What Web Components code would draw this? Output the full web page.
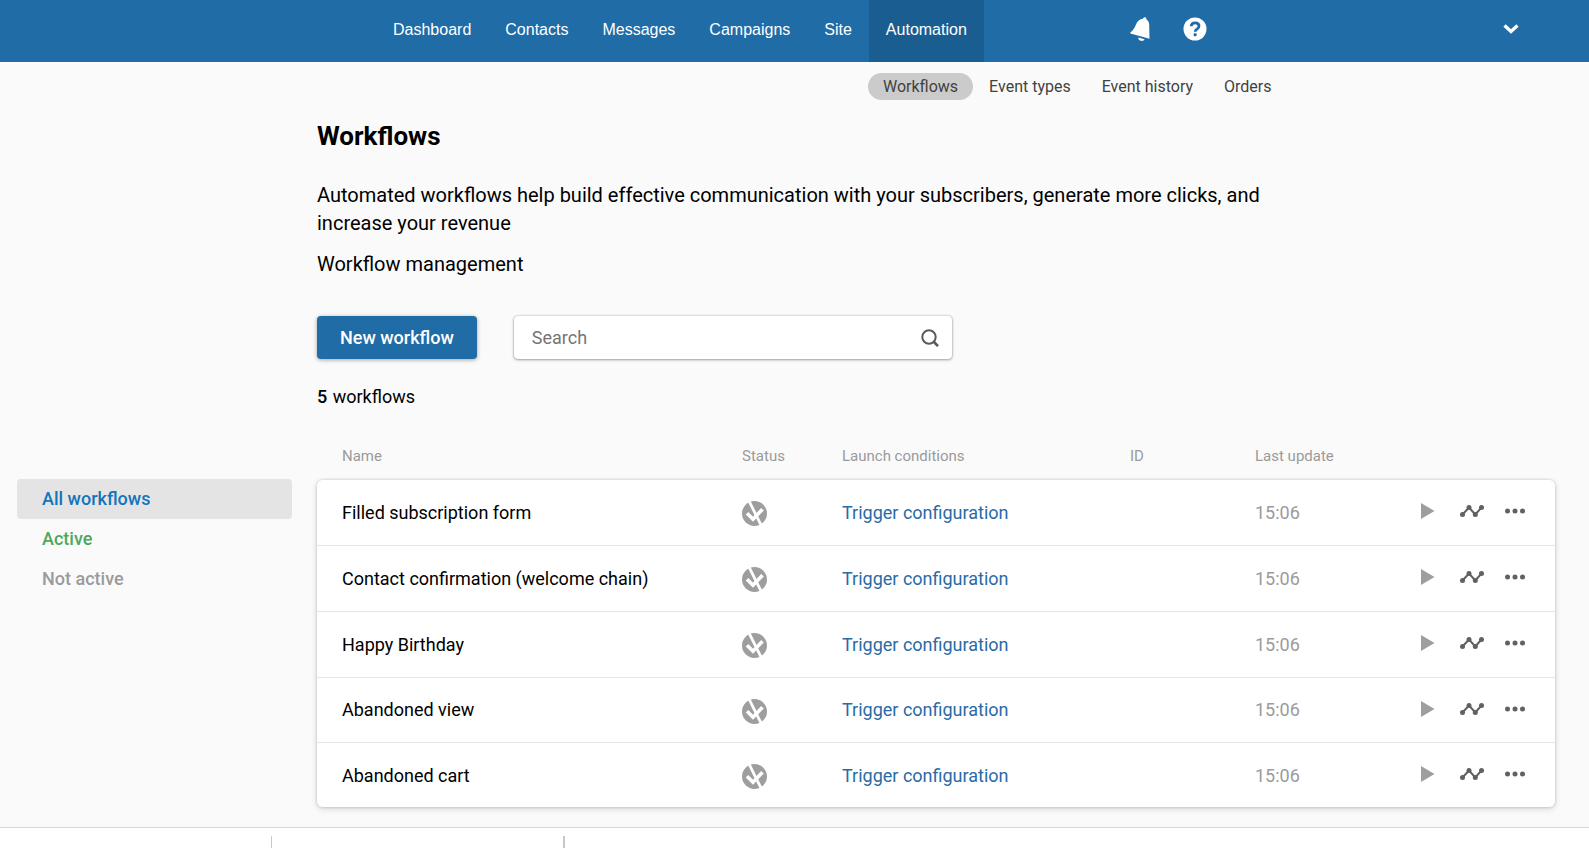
<!DOCTYPE html>
<html lang="en">
<head>
<meta charset="utf-8">
<title>Workflows</title>
<style>
  body {
    margin: 0;
    background: #fafafa;
    color: #000;
    font-family: Roboto, "Liberation Sans", sans-serif;
    font-size: 18px;
  }
</style>
</head>
<body>
<workflow-page></workflow-page>

<script>
class BaseElement extends HTMLElement {
  constructor() {
    super();
    this.attachShadow({ mode: "open" });
  }

  connectedCallback() {
    const template = document.createElement("template");
    template.innerHTML = `<style>${this.getStyles()}</style>${this.getTemplate()}`;
    this.shadowRoot.replaceChildren(template.content.cloneNode(true));
  }
}

class TopBar extends BaseElement {
  getTemplate() {
    const items = ["Dashboard", "Contacts", "Messages", "Campaigns", "Site", "Automation"];
    return `
    <nav aria-label="Main">
      ${items.map((item) => `<a href="#"${item === "Automation" ? ' class="active"' : ""}>${item}</a>`).join("")}
    </nav>
    <div class="tools">
      <button aria-label="Notifications">
        <svg width="20" height="24" viewBox="0 0 20 24" fill="#fff">
          <path d="M14.8 0.2c1.2.1 1.9 1 1.6 2.2 1.9 1.2 2.8 3 2.8 5.4l.3 14L.4 16.6c-.3-.7 0-1.2.5-1.6 2.400-2 3.800-4.200 5-7.200C7.300 4.200 9.600 2.100 13 1.800c.2-1 .8-1.600 1.800-1.600z"/>
          <path d="M8.200 20.400l6.400 1.900c-.7 1.300-2 1.900-3.600 1.500-1.700-.5-2.700-1.700-2.800-3.400z"/>
        </svg>
      </button>
      <button aria-label="Help">
        <svg width="24" height="24" viewBox="0 0 24 24">
          <circle cx="12" cy="12" r="11.500" fill="#fff"/>
          <path d="M8.200 9.300c.1-2.200 1.600-3.500 3.900-3.500 2.300 0 3.900 1.300 3.900 3.200 0 1.500-.8 2.300-2 3.100-1.200.8-1.800 1.300-1.800 2.700" fill="none" stroke="#1f6ca6" stroke-width="2.800"/>
          <rect x="10.700" y="16.300" width="2.900" height="2.900" rx=".6" fill="#1f6ca6"/>
        </svg>
      </button>
    </div>
    <button class="account" aria-label="Account">
      <svg width="16" height="10" viewBox="0 0 16 10" fill="none" stroke="#fff" stroke-width="3.400">
        <path d="M1.500 1.500L8 7.400l6.500-5.900"/>
      </svg>
    </button>`;
  }

  getStyles() {
    return `
    :host {
      display: flex;
      height: 62px;
      padding: 0 50px 0 376px;
      background: #1f6ca6;
    }
    nav {
      display: flex;
      font-family: "Liberation Sans", Arial, sans-serif;
      font-size: 16px;
    }
    a {
      padding: 0 17px;
      line-height: 59px;
      color: #fff;
      text-decoration: none;
    }
    .active { background: #1a5e91; }
    .tools {
      display: flex;
      gap: 33px;
      margin-left: 146px;
    }
    button {
      display: flex;
      align-items: center;
      height: 58px;
      padding: 0;
      border: 0;
      background: none;
      cursor: pointer;
    }
    .account {
      margin-left: auto;
      padding-right: 20px;
    }`;
  }
}

class SubNav extends BaseElement {
  getTemplate() {
    return `
    <a href="#" class="active">Workflows</a>
    <a href="#">Event types</a>
    <a href="#">Event history</a>
    <a href="#">Orders</a>`;
  }

  getStyles() {
    return `
    :host {
      display: flex;
      gap: 1px;
      padding: 11px 0 0 868px;
      font-size: 16px;
    }
    a {
      padding: 0 15px;
      line-height: 27px;
      color: #424242;
      text-decoration: none;
      border-radius: 14px;
      white-space: nowrap;
    }
    .active { background: #cbcbcb; }`;
  }
}

class StatusFilter extends BaseElement {
  getTemplate() {
    return `
    <a href="#" class="all">All workflows</a>
    <a href="#" class="on">Active</a>
    <a href="#" class="off">Not active</a>`;
  }

  getStyles() {
    return `
    :host { display: block; }
    a {
      display: block;
      padding: 0 25px;
      line-height: 40px;
      border-radius: 4px;
      font-weight: 500;
      text-decoration: none;
    }
    .all { background: #e4e4e4; color: #1274bb; }
    .on { color: #4ca85b; }
    .off { color: #9b9b9b; }`;
  }
}

class SearchBox extends BaseElement {
  getTemplate() {
    return `
    <input type="search" placeholder="Search" aria-label="Search">
    <button aria-label="Find">
      <svg width="18" height="18" viewBox="0 0 18 18" fill="none" stroke="#5a5a5a">
        <circle cx="8" cy="8" r="6.700" stroke-width="2"/>
        <path d="M12.500 12.500l4.500 4.700" stroke-width="2.600"/>
      </svg>
    </button>`;
  }

  getStyles() {
    return `
    :host {
      display: flex;
      align-items: center;
      box-sizing: border-box;
      width: 438px;
      height: 43px;
      padding: 0 13px 0 18px;
      background: #fff;
      border-radius: 4px;
      box-shadow: 0 0 2px rgba(0, 0, 0, .3), 0 1px 3px rgba(0, 0, 0, .3);
    }
    input {
      flex: 1;
      min-width: 0;
      padding: 0;
      border: 0;
      outline: 0;
      background: none;
      font: inherit;
    }
    input::placeholder { color: #757575; }
    button {
      display: flex;
      padding: 0;
      border: 0;
      background: none;
    }`;
  }
}

class WorkflowTable extends BaseElement {
  getRow(name) {
    return `
    <tr>
      <td>${name}</td>
      <td>
        <svg class="status" role="img" aria-label="Not active" width="25" height="25" viewBox="0 0 25 25">
          <circle cx="12.500" cy="12.500" r="12.500" fill="#9e9e9e"/>
          <path d="M5 12.200l6 6L20.500 8.300" fill="none" stroke="#fff" stroke-width="3.600"/>
          <path d="M6.500-1L20 26" stroke="#fff" stroke-width="2.800"/>
        </svg>
      </td>
      <td><a href="#">Trigger configuration</a></td>
      <td></td>
      <td class="time">15:06</td>
      <td>
        <div class="actions">
          <button aria-label="Launch">
            <svg width="14" height="16" viewBox="0 0 14 16"><path d="M0 0l13.500 8L0 16z" fill="#9e9e9e"/></svg>
          </button>
          <button aria-label="Statistics">
            <svg width="24" height="14" viewBox="0 0 24 14" fill="#616161">
              <path d="M2.500 10.500L9 3.500l6.300 7L21.500 3.500" fill="none" stroke="#616161" stroke-width="2"/>
              <circle cx="2.500" cy="10.500" r="2.500"/><circle cx="9" cy="3.500" r="2.500"/>
              <circle cx="15.300" cy="10.500" r="2.500"/><circle cx="21.500" cy="3.500" r="2.500"/>
            </svg>
          </button>
          <button aria-label="More">
            <svg width="20" height="6" viewBox="0 0 20 6" fill="#616161">
              <circle cx="2.500" cy="3" r="2.500"/><circle cx="10" cy="3" r="2.500"/><circle cx="17.500" cy="3" r="2.500"/>
            </svg>
          </button>
        </div>
      </td>
    </tr>`;
  }

  getTemplate() {
    const names = [
      "Filled subscription form",
      "Contact confirmation (welcome chain)",
      "Happy Birthday",
      "Abandoned view",
      "Abandoned cart",
    ];
    return `
    <table>
      <colgroup>
        <col><col class="status-col"><col class="launch-col">
        <col class="id-col"><col class="date-col"><col class="date-col">
      </colgroup>
      <thead>
        <tr><th>Name</th><th>Status</th><th>Launch conditions</th><th>ID</th><th>Last update</th><th></th></tr>
      </thead>
      <tbody>${names.map((name) => this.getRow(name)).join("")}</tbody>
    </table>`;
  }

  getStyles() {
    return `
    :host { display: block; }
    table {
      width: 100%;
      height: 375px;
      table-layout: fixed;
      border-spacing: 0;
    }
    .status-col { width: 100px; }
    .launch-col { width: 288px; }
    .id-col { width: 125px; }
    .date-col { width: 150px; }
    th, td {
      padding: 0;
      text-align: left;
    }
    th:first-child, td:first-child { padding-left: 25px; }
    th {
      height: 48px;
      color: #9b9b9b;
      font-size: 15px;
      font-weight: 400;
    }
    tbody {
      border-radius: 6px;
      box-shadow: 0 0 3px rgba(0, 0, 0, .2), 0 2px 6px rgba(0, 0, 0, .14);
    }
    td {
      background: #fff;
      border-bottom: 1px solid #e6e6e6;
    }
    tr:last-child td { border-bottom: 0; }
    tr:first-child td:first-child { border-top-left-radius: 6px; }
    tr:first-child td:last-child { border-top-right-radius: 6px; }
    tr:last-child td:first-child { border-bottom-left-radius: 6px; }
    tr:last-child td:last-child { border-bottom-right-radius: 6px; }
    a {
      color: #296ba5;
      text-decoration: none;
    }
    .time { color: #9b9b9b; }
    .status {
      display: block;
      margin-top: 3px;
    }
    .actions {
      display: flex;
      align-items: center;
      justify-content: flex-end;
      padding: 0 30px 2px 0;
    }
    button {
      display: flex;
      margin-left: 21px;
      padding: 0;
      border: 0;
      background: none;
    }
    button:nth-child(2) { margin-left: 25px; }`;
  }
}

class BottomBar extends BaseElement {
  getTemplate() {
    return `<span></span><span class="wide"></span>`;
  }

  getStyles() {
    return `
    :host {
      display: flex;
      gap: 291px;
      height: 12px;
      padding: 8px 0 0 271px;
      border-top: 1px solid #d9d9d9;
      background: #fff;
    }
    span {
      width: 1px;
      background: #c8c8c8;
    }
    .wide { width: 2px; }`;
  }
}

class WorkflowPage extends BaseElement {
  getTemplate() {
    return `
    <top-bar></top-bar>
    <sub-nav></sub-nav>
    <div class="content">
      <status-filter></status-filter>
      <main>
        <h1>Workflows</h1>
        <p>Automated workflows help build effective communication with your subscribers, generate more clicks, and increase your revenue</p>
        <p>Workflow management</p>
        <div class="toolbar">
          <button>New workflow</button>
          <search-box></search-box>
        </div>
        <div class="count"><b>5</b> workflows</div>
        <workflow-table></workflow-table>
      </main>
    </div>
    <bottom-bar></bottom-bar>`;
  }

  getStyles() {
    return `
    :host {
      display: flex;
      flex-direction: column;
      min-height: 100vh;
    }
    .content {
      flex: 1;
      display: flex;
      gap: 25px;
      padding: 20px 34px 20px 17px;
    }
    status-filter {
      flex: 0 0 275px;
      margin-top: 359px;
    }
    main {
      flex: 1;
      min-width: 0;
    }
    h1 {
      margin: 0 0 29px;
      font-size: 26px;
      line-height: 32px;
      font-weight: 700;
    }
    p {
      max-width: 960px;
      margin: 0 0 13px;
      font-size: 20px;
      line-height: 28px;
    }
    .toolbar {
      display: flex;
      gap: 37px;
      margin-top: 38px;
    }
    .toolbar button {
      height: 43px;
      padding: 0 23px;
      border: 0;
      border-radius: 4px;
      background: #1f6ca6;
      color: #fff;
      font: inherit;
      font-weight: 500;
      box-shadow: 0 1px 4px rgba(0, 0, 0, .35);
    }
    .count {
      margin: 24px 0 21px;
      line-height: 28px;
    }
    b {
      margin-right: 1px;
      font-weight: 500;
    }`;
  }
}

customElements.define("top-bar", TopBar);
customElements.define("sub-nav", SubNav);
customElements.define("status-filter", StatusFilter);
customElements.define("search-box", SearchBox);
customElements.define("workflow-table", WorkflowTable);
customElements.define("bottom-bar", BottomBar);
customElements.define("workflow-page", WorkflowPage);
</script>
</body>
</html>
